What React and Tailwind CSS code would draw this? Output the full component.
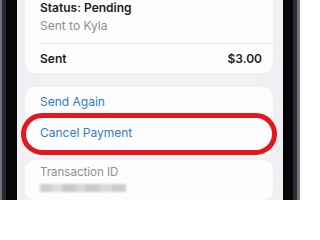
export default function App() {
  const font = { fontFamily: 'Inter, "Noto Sans", sans-serif' };
  return (
    <div className="relative w-[300px] h-[200px] overflow-hidden flex bg-black" style={font}>
      {/* left phone frame */}
      <div className="w-[2px] h-full bg-[#77717e]" />
      <div className="w-[4px] h-full bg-[#2c2832]" />
      <div className="w-[11px] h-full bg-[#060606]" />
      {/* screen */}
      <div className="w-[266px] h-full bg-[#efeff4] pl-[8px] pr-[10px] flex flex-col">
        {/* card 1 */}
        <div className="-mt-[10px] bg-[#fdfdfd] rounded-[10px] flex flex-col">
          <div className="pt-[10px] pb-[9px] pl-[15px] flex flex-col gap-[2px]">
            <div className="h-[16px] leading-[16px] text-[12px] font-semibold text-[#1c1c1e]">Status: Pending</div>
            <div className="h-[16px] leading-[16px] text-[12px] text-[#8e8e93]">Sent to Kyla</div>
          </div>
          <div className="ml-[15px] h-px bg-[#e6e6ea]" />
          <div className="h-[29px] pl-[15px] pr-[11px] flex items-center justify-between text-[12px] font-semibold text-[#1c1c1e]">
            <span>Sent</span>
            <span>$3.00</span>
          </div>
        </div>
        {/* card 2 */}
        <div className="mt-[14px] bg-[#fdfdfd] rounded-[10px] flex flex-col">
          <div className="h-[30px] pl-[15px] flex items-center text-[12px] text-[#2f7cc9]">Send Again</div>
          <div className="ml-[15px] h-px bg-[#e6e6ea]" />
          <div className="h-[39px] pl-[15px] pt-[7px] leading-[16px] text-[12px] text-[#2f7cc9]">Cancel Payment</div>
        </div>
        {/* card 3 */}
        <div className="mt-[3px] bg-[#fdfdfd] rounded-[10px] flex flex-col pl-[15px] pt-[4px] h-[60px]">
          <div className="h-[16px] leading-[16px] text-[11.5px] text-[#8e8e93]">Transaction ID</div>
          <div className="mt-[4px] w-[86px] h-[8px] flex blur-[0.8px]">
            <div className="w-[12px] bg-[#cfcfd3]" />
            <div className="w-[10px] bg-[#dcdce0]" />
            <div className="w-[14px] bg-[#c9c9cd]" />
            <div className="w-[9px] bg-[#d8d8dc]" />
            <div className="w-[15px] bg-[#cbcbcf]" />
            <div className="w-[12px] bg-[#d9d9dd]" />
            <div className="w-[14px] bg-[#cdcdd1]" />
          </div>
        </div>
      </div>
      {/* right phone frame */}
      <div className="w-[10px] h-full bg-[#060606]" />
      <div className="w-[4px] h-full bg-[#2c2832]" />
      <div className="w-[3px] h-full bg-[#77717e]" />
      {/* red annotation ring */}
      <div className="absolute left-[21px] top-[113px] w-[256px] h-[42px] rounded-full border-[5px] border-[#e5161d]" />
    </div>
  );
}
